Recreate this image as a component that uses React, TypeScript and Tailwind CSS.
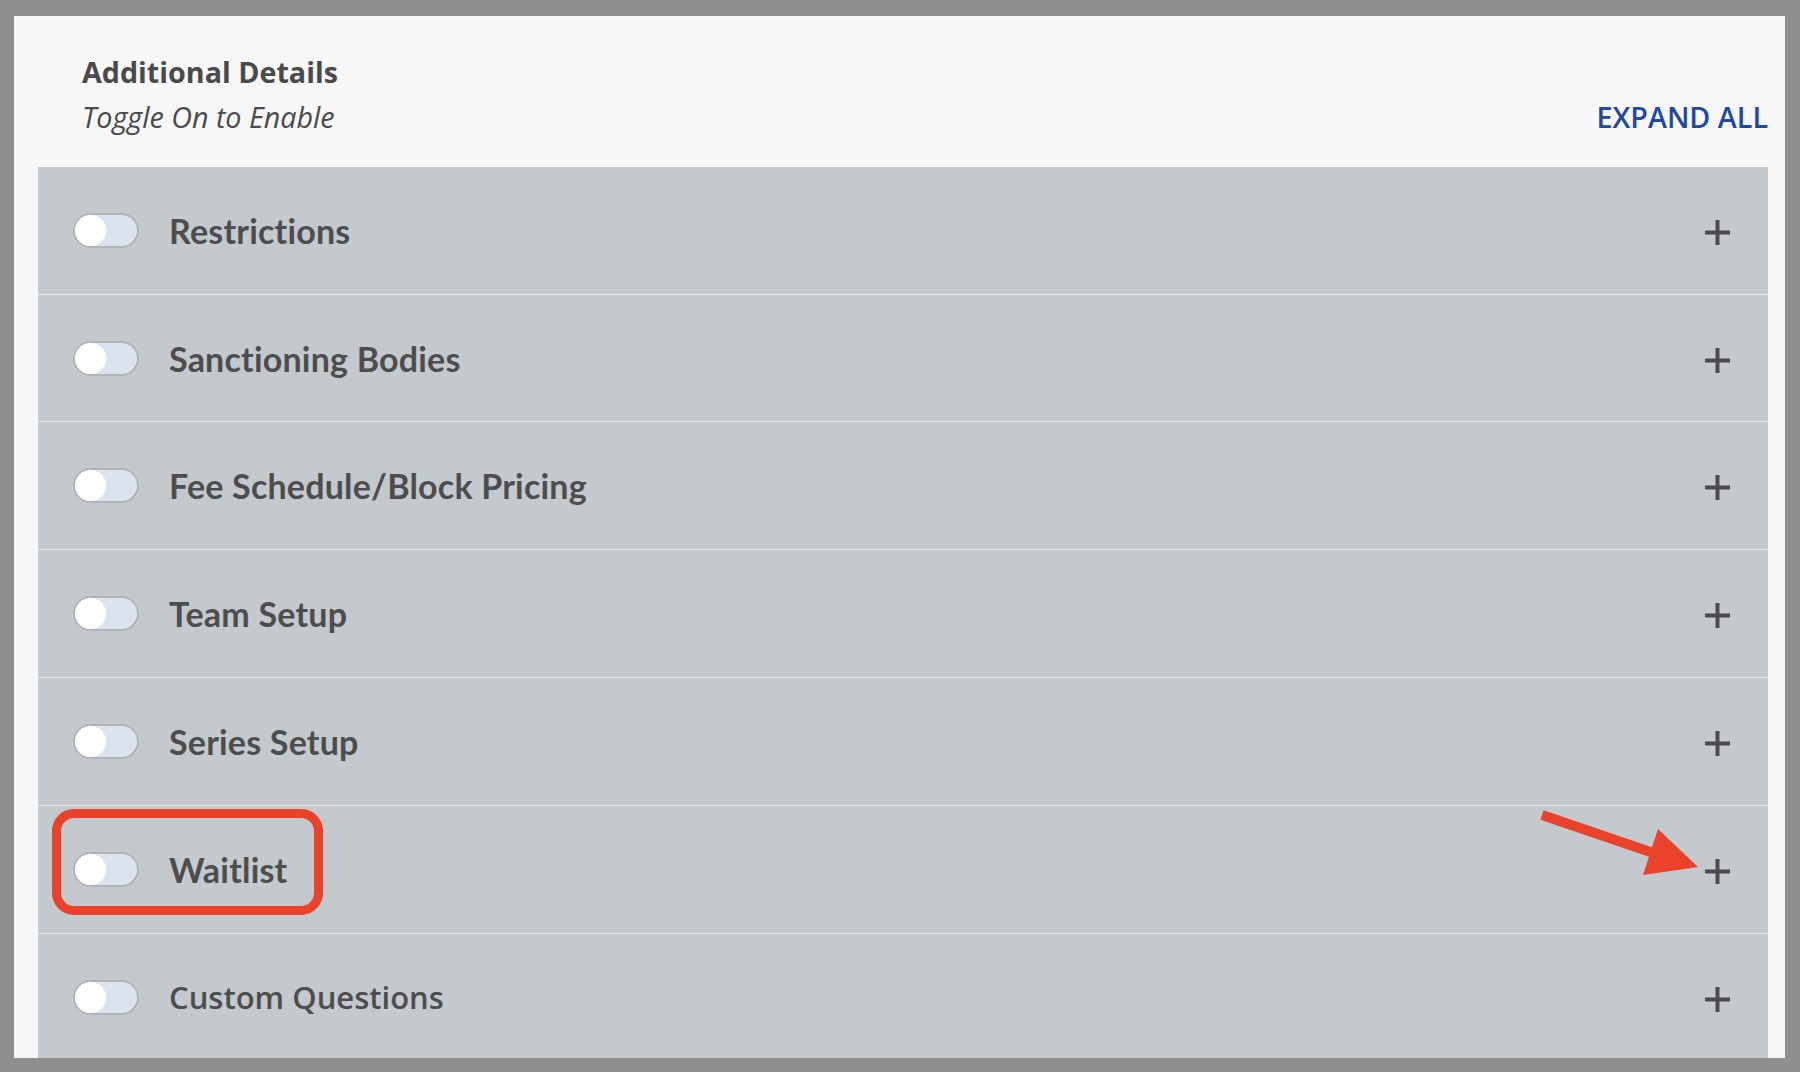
import React from "react";

const rows = [
  { t: "Restrictions", h: "h-[127px]" },
  { t: "Sanctioning Bodies", h: "h-[127px]" },
  { t: "Fee Schedule/Block Pricing", h: "h-[128px]" },
  { t: "Team Setup", h: "h-[128px]" },
  { t: "Series Setup", h: "h-[128px]" },
  { t: "Waitlist", h: "h-[128px]" },
  { t: "Custom Questions", h: "h-[128px]" },
];

function Toggle() {
  return (
    <div className="flex h-[35px] w-[66px] shrink-0 items-center rounded-full border-2 border-[#b1b3b5] bg-[#dbe4ee]">
      <div className="h-[31px] w-[31px] rounded-full bg-white" />
    </div>
  );
}

function Plus() {
  return (
    <svg width="25" height="25" viewBox="0 0 25 25" className="mt-[4px] shrink-0">
      <rect x="10.5" y="0" width="4" height="25" fill="#4b4b4b" />
      <rect x="0" y="10.5" width="25" height="4" fill="#4b4b4b" />
    </svg>
  );
}

export default function App() {
  return (
    <div className="relative h-[1072px] w-full bg-[#8f8f8f] pb-[14px] pl-[14px] pr-[15px] pt-[16px]">
      <div className="flex h-full flex-col overflow-hidden bg-[#f7f7f7] pl-[24px] pr-[17px]">
        <div className="flex shrink-0 items-end justify-between pb-[31px] pl-[44px] pt-[37px]">
          <div className="flex flex-col text-[#4a4a4a] [font-family:'Open_Sans',sans-serif]">
            <div className="text-[28.7px] font-bold leading-[38px]">Additional Details</div>
            <div className="mt-[7px] text-[28.7px] italic leading-[38px]">Toggle On to Enable</div>
          </div>
          <div className="text-[28.7px] font-semibold leading-[38px] text-[#2148a3] [font-family:'Open_Sans',sans-serif]">
            EXPAND ALL
          </div>
        </div>
        <div className="flex flex-col bg-[#c4c9ce]">
          {rows.map((r, i) => (
            <div
              key={r.t}
              className={
                "flex shrink-0 items-center pl-[35px] pr-[38px] " +
                r.h +
                (i === 0 ? "" : " border-t border-[#e4e7ea]")
              }
            >
              <Toggle />
              <div
                className={
                  i === rows.length - 1
                    ? "ml-[30px] flex-1 text-[31px] font-semibold text-[#4d4d4d] [font-family:'Open_Sans',sans-serif]"
                    : "ml-[30px] flex-1 text-[34px] font-bold tracking-[0.2px] text-[#4d4d4d] [font-family:Lato,sans-serif] [font-variant-ligatures:none]"
                }
              >
                {r.t}
              </div>
              <Plus />
            </div>
          ))}
        </div>
      </div>

      <div className="pointer-events-none absolute left-[52px] top-[809px] h-[106px] w-[271px] rounded-[22px] border-[9px] border-[#e9412a]" />

      <svg
        className="pointer-events-none absolute left-0 top-0"
        width="1800"
        height="1072"
        viewBox="0 0 1800 1072"
      >
        <polygon
          points="1543.6,810.3 1652,847.3 1658,829 1698,867 1643,875 1649,856.7 1540.4,819.7"
          fill="#e9412a"
        />
      </svg>
    </div>
  );
}
